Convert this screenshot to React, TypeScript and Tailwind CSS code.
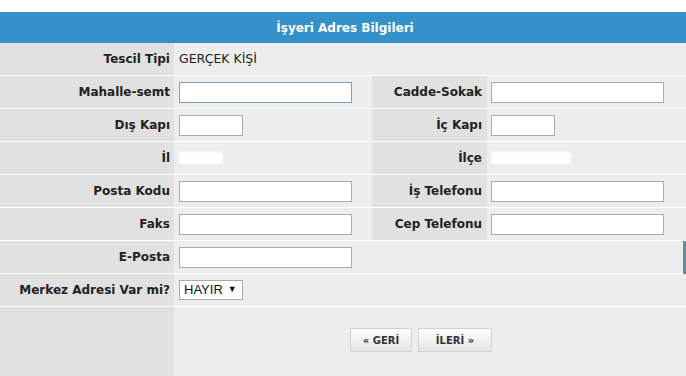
import React from "react";

const lbl = "font-bold text-[#222] text-right pr-[4px] flex items-center justify-end";
const font = { fontFamily: '"DejaVu Sans", Verdana, sans-serif' };

function Input({ w, focus }: { w: number; focus?: boolean }) {
  return (
    <div
      className={`h-[21px] bg-white border ${focus ? "border-[#7b9ec2]" : "border-[#ababab]"}`}
      style={{ width: w }}
    />
  );
}

function Row({
  l1,
  v1,
  l2,
  v2,
  extra,
}: {
  l1: string;
  v1: React.ReactNode;
  l2?: string;
  v2?: React.ReactNode;
  extra?: React.ReactNode;
}) {
  return (
    <div className="flex h-[33px] border-b border-white">
      <div className={`w-[174px] bg-[#e1e1e1] ${lbl}`}>{l1}</div>
      <div className="w-[198px] bg-[#ededed] flex items-center pl-[5px]">{v1}</div>
      {l2 !== undefined ? (
        <>
          <div className={`w-[115px] bg-[#e1e1e1] ${lbl} pr-[5px]`}>{l2}</div>
          <div className="flex-1 bg-[#ededed] flex items-center pl-[4px]">{v2}</div>
        </>
      ) : (
        <div className="flex-1 bg-[#ededed] flex justify-end">{extra}</div>
      )}
    </div>
  );
}

function Btn({ children, w }: { children: React.ReactNode; w: number }) {
  return (
    <div
      className="h-[24px] flex items-center justify-center border border-[#d2d2d2] bg-gradient-to-b from-white to-[#e4e4e4] text-[10px] font-bold text-[#333]"
      style={{ width: w }}
    >
      {children}
    </div>
  );
}

export default function App() {
  return (
    <div className="w-[686px] h-[376px] bg-white overflow-hidden text-[12px]" style={font}>
      <div className="h-[12px]" />
      <div className="h-[31px] bg-[#3592c9] text-white font-bold flex items-center justify-center text-[12px] pl-[4px]">
        İşyeri Adres Bilgileri
      </div>
      <Row l1="Tescil Tipi" v1={<span className="text-[#222] text-[12.5px]">GERÇEK KİŞİ</span>} />
      <Row l1="Mahalle-semt" v1={<Input w={173} focus />} l2="Cadde-Sokak" v2={<Input w={173} />} />
      <Row l1="Dış Kapı" v1={<Input w={64} />} l2="İç Kapı" v2={<Input w={64} />} />
      <Row
        l1="İl"
        v1={<div className="w-[44px] h-[12px] bg-white rounded-r-[4px] blur-[1px]" />}
        l2="İlçe"
        v2={<div className="w-[80px] h-[12px] bg-white rounded-r-[4px] blur-[1px]" />}
      />
      <Row l1="Posta Kodu" v1={<Input w={173} />} l2="İş Telefonu" v2={<Input w={173} />} />
      <Row l1="Faks" v1={<Input w={173} />} l2="Cep Telefonu" v2={<Input w={173} />} />
      <Row
        l1="E-Posta"
        v1={<Input w={173} />}
        extra={<div className="w-[3px] h-[33px] bg-[#5e8f9e]" />}
      />
      <Row
        l1="Merkez Adresi Var mi?"
        v1={
          <div
            className="w-[64px] h-[20px] bg-white border border-[#a9a9a9] flex items-center pl-[4px] text-[13px] text-[#111]"
            style={{ fontFamily: '"Liberation Sans", Arial, sans-serif' }}
          >
            HAYIR<span className="text-[9px] ml-[5px]">▼</span>
          </div>
        }
      />
      <div className="flex h-[80px]">
        <div className="w-[174px] bg-[#e1e1e1]" />
        <div className="flex-1 bg-[#ededed] flex items-start pt-[21px] pl-[176px] gap-[6px]">
          <Btn w={62}>« GERİ</Btn>
          <Btn w={74}>İLERİ »</Btn>
        </div>
      </div>
    </div>
  );
}
